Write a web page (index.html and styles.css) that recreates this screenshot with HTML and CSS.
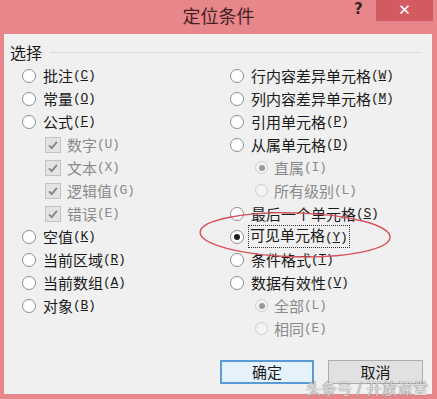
FILE: index.html
```html
<!DOCTYPE html>
<html lang="zh-CN">
<head>
    <meta charset="UTF-8">
    <title>定位条件</title>
    <link rel="stylesheet" href="styles.css">
</head>
<body>
    <div class="dialog">
      <div class="titlebar">
        <span class="title">定位条件</span>
        <span class="help">?</span>
        <span class="close">&#x2715;</span>
      </div>
      <div class="panel">
        <div class="group-head">
          <span>选择</span>
          <span class="rule"></span>
        </div>
        <div class="columns">
          <div class="col">
            <div class="row"><span class="radio"></span>批注<span class="key">(<u>C</u>)</span></div>
            <div class="row"><span class="radio"></span>常量<span class="key">(<u>O</u>)</span></div>
            <div class="row"><span class="radio"></span>公式<span class="key">(<u>F</u>)</span></div>
            <div class="row sub off"><span class="check"><svg viewBox="0 0 16 16"><path d="M3.5 8.5 L6.5 11.5 L12.5 4.5" /></svg></span>数字<span class="key">(U)</span></div>
            <div class="row sub off"><span class="check"><svg viewBox="0 0 16 16"><path d="M3.5 8.5 L6.5 11.5 L12.5 4.5" /></svg></span>文本<span class="key">(X)</span></div>
            <div class="row sub off"><span class="check"><svg viewBox="0 0 16 16"><path d="M3.5 8.5 L6.5 11.5 L12.5 4.5" /></svg></span>逻辑值<span class="key">(G)</span></div>
            <div class="row sub off"><span class="check"><svg viewBox="0 0 16 16"><path d="M3.5 8.5 L6.5 11.5 L12.5 4.5" /></svg></span>错误<span class="key">(E)</span></div>
            <div class="row"><span class="radio"></span>空值<span class="key">(<u>K</u>)</span></div>
            <div class="row"><span class="radio"></span>当前区域<span class="key">(<u>R</u>)</span></div>
            <div class="row"><span class="radio"></span>当前数组<span class="key">(<u>A</u>)</span></div>
            <div class="row"><span class="radio"></span>对象<span class="key">(<u>B</u>)</span></div>
          </div>
          <div class="col">
            <div class="row"><span class="radio"></span>行内容差异单元格<span class="key">(<u>W</u>)</span></div>
            <div class="row"><span class="radio"></span>列内容差异单元格<span class="key">(<u>M</u>)</span></div>
            <div class="row"><span class="radio"></span>引用单元格<span class="key">(<u>P</u>)</span></div>
            <div class="row"><span class="radio"></span>从属单元格<span class="key">(<u>D</u>)</span></div>
            <div class="row sub off"><span class="radio on"></span>直属<span class="key">(I)</span></div>
            <div class="row sub off"><span class="radio"></span>所有级别<span class="key">(L)</span></div>
            <div class="row"><span class="radio"></span>最后一个单元格<span class="key">(<u>S</u>)</span></div>
            <div class="row"><span class="radio on"></span><span class="focus">可见单元格<span class="key">(<u>Y</u>)</span></span></div>
            <div class="row"><span class="radio"></span>条件格式<span class="key">(<u>T</u>)</span></div>
            <div class="row"><span class="radio"></span>数据有效性<span class="key">(<u>V</u>)</span></div>
            <div class="row sub off"><span class="radio on"></span>全部<span class="key">(L)</span></div>
            <div class="row sub off"><span class="radio"></span>相同<span class="key">(E)</span></div>
          </div>
        </div>
        <div class="buttons">
          <button class="btn default">确定</button>
          <button class="btn">取消</button>
        </div>
      </div>
      <svg class="mark" width="220" height="60" viewBox="0 0 220 60">
        <ellipse cx="103" cy="27" rx="95" ry="22" />
      </svg>
      <div class="watermark">头条号 / 开放课堂</div>
    </div>
</body>
</html>
```

FILE: styles.css
```css
html, body {
  margin: 0;
  padding: 0;
}
body {
  width: 437px;
  height: 399px;
  overflow: hidden;
  font-family: "Noto Sans CJK SC", "Noto Sans", sans-serif;
}
.dialog {
  position: relative;
  width: 437px;
  height: 399px;
  background: #e7878b;
  display: flex;
  flex-direction: column;
}
.titlebar {
  height: 34px;
  position: relative;
  display: flex;
  justify-content: center;
  align-items: flex-start;
}
.title {
  margin-top: 3px;
  font-size: 18px;
  line-height: 24px;
  color: #452123;
}
.help {
  position: absolute;
  left: 354px;
  top: 0;
  font: bold 15px/18px "DejaVu Sans", sans-serif;
  color: #3b2426;
}
.close {
  position: absolute;
  left: 376px;
  top: 0;
  width: 57px;
  height: 21px;
  background: #d25a61;
  color: #fff;
  font: bold 15px/21px "DejaVu Sans", sans-serif;
  text-align: center;
}
.panel {
  flex: 1;
  margin: 0 5px 5px 4px;
  background: #f0f0f0;
  padding: 8px 9px 10px 6px;
  display: flex;
  flex-direction: column;
  color: #1a1a1a;
  font-size: 15px;
}
.group-head {
  height: 20px;
  display: flex;
  align-items: center;
  font-size: 16px;
  line-height: 20px;
}
.group-head .rule {
  flex: 1;
  height: 1px;
  background: #d9d9d9;
  margin: 0 3px 0 8px;
}
.columns {
  margin-top: 2px;
  display: grid;
  grid-template-columns: 208px 1fr;
  padding-left: 12px;
}
.row {
  height: 23px;
  display: flex;
  align-items: center;
  white-space: nowrap;
  line-height: 18px;
}
.key {
  font-family: "Liberation Mono", monospace;
  font-size: 13px;
  letter-spacing: -0.3px;
}
.radio {
  box-sizing: border-box;
  width: 14px;
  height: 14px;
  border-radius: 50%;
  border: 1px solid #8e8e8e;
  background: #fff;
  margin-right: 7px;
  flex: none;
  display: flex;
  align-items: center;
  justify-content: center;
}
.radio.on::after {
  content: "";
  width: 6px;
  height: 6px;
  border-radius: 50%;
  background: #1e1e1e;
}
.col:first-child .sub {
  padding-left: 23px;
}
.col:last-child .sub {
  padding-left: 25px;
}
.sub .radio {
  width: 13px;
  height: 13px;
  margin-right: 6px;
}
.off {
  color: #8a8a8a;
}
.off .radio {
  border-color: #cdcdcd;
  background: #f3f3f3;
}
.off .radio.on::after {
  background: #9a9a9a;
}
.check {
  box-sizing: border-box;
  width: 16px;
  height: 16px;
  border: 1px solid #c2c2c2;
  background: #e3e3e3;
  margin-right: 6px;
  flex: none;
  display: flex;
}
.check svg {
  width: 14px;
  height: 14px;
  fill: none;
  stroke: #858585;
  stroke-width: 2.2;
}
.focus {
  outline: 1px dotted #333;
  outline-offset: 0;
  padding: 0 1px;
  margin-left: -2px;
}
.buttons {
  margin-top: auto;
  display: flex;
  justify-content: flex-end;
  gap: 14px;
}
.btn {
  box-sizing: border-box;
  height: 24px;
  width: 94px;
  font-family: "Noto Sans CJK SC", sans-serif;
  font-size: 15px;
  line-height: 18px;
  color: #1a1a1a;
  background: #e1e1e1;
  border: 1px solid #adadad;
  padding: 0;
}
.btn.default {
  border: 2px solid #5b9bd5;
  background: #e5f1fb;
}
.btn:last-child {
  width: 95px;
}
.mark {
  position: absolute;
  left: 192px;
  top: 208px;
  transform: rotate(1.5deg);
}
.mark ellipse {
  fill: none;
  stroke: #d8505a;
  stroke-width: 1.4;
}
.watermark {
  position: absolute;
  left: 306px;
  top: 378px;
  font-size: 15px;
  line-height: 20px;
  color: rgba(246, 240, 240, 0.85);
  text-shadow: 0 0 1px #777, 0 0 1px #777;
  letter-spacing: 0.5px;
}
```
